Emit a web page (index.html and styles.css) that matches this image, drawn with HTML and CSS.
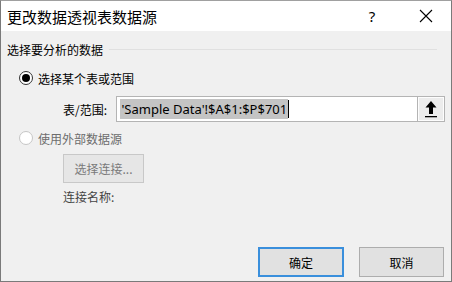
FILE: index.html
```html
<!DOCTYPE html>
<html lang="zh-CN">
<head>
	<meta charset="utf-8">
	<title>更改数据透视表数据源</title>
	<link rel="stylesheet" href="styles.css">
</head>
<body>
	<div class="dialog">
		<div class="titlebar">
			<span class="title">更改数据透视表数据源</span>
			<span class="help">?</span>
			<span class="close">
				<svg width="14" height="14" viewBox="0 0 14 14"><path d="M1 1L13 13M13 1L1 13" stroke="#000" stroke-width="1.1" fill="none"/></svg>
			</span>
		</div>
		<div class="body">
			<div class="group">
				<span>选择要分析的数据</span>
				<div class="rule"></div>
			</div>

			<div class="radio-row">
				<span class="radio on"></span>
				<span>选择某个表或范围</span>
			</div>
			<div class="range-row">
				<span class="label">表/范围:</span>
				<div class="range-box">
					<span class="sel">'Sample Data'!$A$1:$P$701</span><span class="caret"></span>
				</div>
				<div class="pick">
					<svg width="14" height="18" viewBox="0 0 14 18"><path d="M7 1L1.5 7.5H5V14H9V7.5H12.5Z" fill="#000"/><rect x="1" y="16" width="12" height="1.3" fill="#000"/></svg>
				</div>
			</div>

			<div class="radio-row off">
				<span class="radio"></span>
				<span>使用外部数据源</span>
			</div>
			<div class="conn">
				<div class="btn dis">选择连接...</div>
				<span class="conn-name">连接名称:</span>
			</div>

			<div class="footer">
				<div class="btn ok">确定</div>
				<div class="btn">取消</div>
			</div>
		</div>
	</div>
</body>
</html>
```

FILE: styles.css
```css
*{
	margin:0;
	padding:0;
	box-sizing: border-box;
}

body {
	width: 452px;
	height: 282px;
	font-family: "Noto Sans CJK SC", "Noto Sans", sans-serif;
	font-size: 12px;
	color: #000;
	background: #f0f0f0;
}

.dialog {
	width: 452px;
	height: 282px;
	border: 1px solid #7a7a7a;
	border-top-color: #a0a0a0;
	display: flex;
	flex-direction: column;
}

.titlebar {
	height: 30px;
	background: #fff;
	display: flex;
	align-items: center;
	padding-left: 6px;
}
.title {
	font-size: 15px;
	flex: 1;
}
.help {
	font-family: "Noto Sans", sans-serif;
	font-size: 15px;
	width: 30px;
	text-align: center;
	margin-right: 26px;
}
.close {
	width: 26px;
	margin-right: 12px;
	display: flex;
	justify-content: center;
}

.body {
	flex: 1;
	display: flex;
	flex-direction: column;
	padding: 8px 6px 4px 6px;
}

.group {
	display: flex;
	align-items: center;
	height: 20px;
}
.rule {
	flex: 1;
	height: 1px;
	background: #e0e0e0;
	margin: 0 8px 0 6px;
}

.radio-row {
	display: flex;
	align-items: center;
	gap: 5px;
	margin-left: 12px;
	height: 20px;
	margin-top: 9px;
}
.radio {
	width: 14px;
	height: 14px;
	border-radius: 50%;
	border: 1px solid #333;
	background: #fff;
	display: flex;
	align-items: center;
	justify-content: center;
}
.radio.on::after {
	content: "";
	width: 8px;
	height: 8px;
	border-radius: 50%;
	background: #000;
}
.off {
	color: #6d6d6d;
	margin-top: 6px;
}
.off .radio {
	border-color: #c6c6c6;
}

.range-row {
	display: flex;
	align-items: center;
	margin-top: 8px;
	margin-left: 56px;
	height: 26px;
}
.label {
	width: 54px;
}
.range-box {
	width: 305px;
	height: 26px;
	background: #fff;
	border: 1px solid #b4b4b4;
	display: flex;
	align-items: center;
	padding-left: 3px;
	font-family: "Noto Sans", sans-serif;
	font-size: 13px;
}
.sel {
	background: #c4c4c4;
	padding: 0 1px;
	line-height: 20px;
}
.caret {
	width: 1px;
	height: 18px;
	background: #000;
}
.pick {
	width: 27px;
	height: 26px;
	border: 1px solid #b4b4b4;
	border-left: none;
	background: #ececec;
	display: flex;
	align-items: center;
	justify-content: center;
	box-shadow: inset 0 0 0 1px #fdfdfd;
}

.conn {
	margin-left: 56px;
	display: flex;
	flex-direction: column;
	gap: 5px;
	margin-top: 6px;
}
.btn {
	width: 85px;
	height: 30px;
	border: 1px solid #adadad;
	background: #e1e1e1;
	display: flex;
	align-items: center;
	justify-content: center;
}
.btn.dis {
	width: 81px;
	height: 29px;
	color: #7a7a7a;
	border-color: #c8c8c8;
	background: #e6e6e6;
}
.conn-name {
	color: #444;
}

.footer {
	margin-top: auto;
	display: flex;
	justify-content: flex-end;
	gap: 15px;
	padding-right: 1px;
}
.btn.ok {
	border: 2px solid #3a8fdc;
	width: 86px;
}
```
